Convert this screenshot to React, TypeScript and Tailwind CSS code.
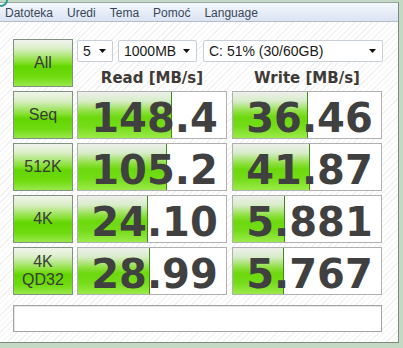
const rows = [
  { label: 'Seq', read: '148.4', readBar: 94, write: '36.46', writeBar: 75 },
  { label: '512K', read: '105.2', readBar: 89, write: '41.87', writeBar: 77 },
  { label: '4K', read: '24.10', readBar: 70, write: '5.881', writeBar: 52 },
  { label: '4K QD32', read: '28.99', readBar: 72, write: '5.767', writeBar: 51 },
];

const menu = ['Datoteka', 'Uredi', 'Tema', 'Pomoć', 'Language'];

function Arrow() {
  return (
    <svg width="7" height="4" viewBox="0 0 7 4" className="shrink-0">
      <path d="M0 0h7L3.5 4z" fill="#111" />
    </svg>
  );
}

function Select({ value, className }: { value: string; className: string }) {
  return (
    <div
      className={`flex h-[22px] items-center justify-between rounded-[2px] border border-[#c9cfd6] bg-white pl-[5px] pr-[6px] text-[14px] text-[#1a1a1a] ${className}`}
    >
      <span>{value}</span>
      <Arrow />
    </div>
  );
}

function TestButton({ label }: { label: string }) {
  const lines = label.split(' ');
  return (
    <div className="flex h-[48px] w-[60px] shrink-0 flex-col items-center justify-center border border-[#7f917f] bg-[linear-gradient(to_bottom,#f2f4ef_0%,#d8eec4_20%,#86e030_48%,#62d600_58%,#6fdb10_80%,#98e84a_100%)] font-['Liberation_Sans'] text-[16px] leading-[18px] text-[#3a3a3a]">
      {lines.map((l) => (
        <span key={l} className="text-[#3a3a3a]">
          {l}
        </span>
      ))}
    </div>
  );
}

function Result({ value, bar }: { value: string; bar: number }) {
  return (
    <div className="relative h-[48px] w-[150px] shrink-0 border border-[#b0b0b0] bg-white">
      <div
        className="absolute bottom-0 left-0 top-0 border-r border-[#3f8a1a] bg-[linear-gradient(to_bottom,#eef0ec_0%,#d7ecc8_20%,#8fe042_42%,#6cd80e_55%,#74dc18_75%,#9bea4a_100%)]"
        style={{ width: bar }}
      />
      <div className="relative flex h-full items-center justify-center pl-[5px] pt-[5px] font-['DejaVu_Sans'] text-[40px] font-bold leading-[40px] text-[#404040]">
        {value}
      </div>
    </div>
  );
}

export default function App() {
  return (
    <div className="relative h-[348px] w-[403px] overflow-hidden bg-[#c3d9c3] pt-[2px] font-['Liberation_Sans',sans-serif]">
      <svg className="absolute left-0 top-0" width="12" height="8" viewBox="0 0 12 8">
        <path d="M-1 5.5A6 6 0 0 0 7 -1" fill="none" stroke="#2f9c96" strokeWidth="2" />
      </svg>
      <div className="flex h-[341px] w-[399px] flex-col border-b border-r border-t border-b-[#7d8a7d] border-r-[#7d8a7d] border-t-[#9aa7a0] shadow-[inset_-1px_-1px_0_#e2e6e2]">
        <div className="flex h-[19px] shrink-0 items-center gap-[14px] border-b border-[#b3bcc7] bg-[linear-gradient(to_bottom,#f4f7fc,#dbe4f3)] pl-[5px] pt-[1px] text-[12px] text-[#37475a]">
          {menu.map((m) => (
            <span key={m}>{m}</span>
          ))}
        </div>
        <div className="flex flex-1 flex-col gap-[4px] bg-[repeating-linear-gradient(135deg,#ffffff_0px,#ffffff_3px,#f1f1f1_3px,#f1f1f1_4px)] pl-[13px] pt-[17px]">
          <div className="flex">
            <TestButton label="All" />
            <div className="ml-[4px] flex flex-col">
              <div className="mt-[1px] flex">
                <Select value="5" className="w-[36px]" />
                <Select value="1000MB" className="ml-[5px] w-[79px]" />
                <Select value="C: 51% (30/60GB)" className="ml-[6px] w-[180px]" />
              </div>
              <div className="mt-[7px] flex font-['DejaVu_Sans'] text-[15px] font-bold leading-[18px] text-[#3f3a35]">
                <div className="w-[150px] text-center">Read [MB/s]</div>
                <div className="ml-[5px] w-[150px] text-center">Write [MB/s]</div>
              </div>
            </div>
          </div>
          {rows.map((r) => (
            <div key={r.label} className="flex">
              <TestButton label={r.label} />
              <div className="ml-[4px]">
                <Result value={r.read} bar={r.readBar} />
              </div>
              <div className="ml-[5px]">
                <Result value={r.write} bar={r.writeBar} />
              </div>
            </div>
          ))}
          <div className="mt-[6px] h-[27px] w-[369px] border border-[#a4a4a4] bg-white shadow-[inset_1px_1px_0_#e4e4e4]" />
        </div>
      </div>
    </div>
  );
}
